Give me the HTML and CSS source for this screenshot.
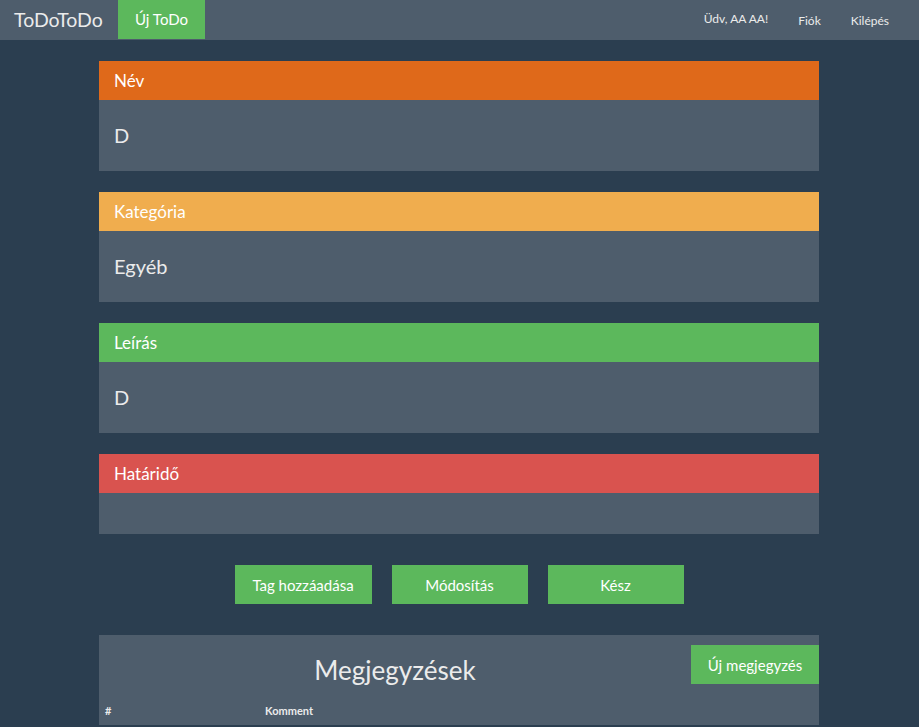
FILE: index.html
```html
<!DOCTYPE html>
<html lang="hu">
<head>
<meta charset="utf-8">
<title>ToDoToDo</title>
<link rel="stylesheet" href="styles.css">
</head>
<body>
<nav class="navbar">
  <div class="nav-left">
    <a class="brand">ToDoToDo</a>
    <a class="nav-new">Új ToDo</a>
  </div>
  <div class="nav-right">
    <span class="greet">Üdv, AA AA!</span>
    <a class="nav-link">Fiók</a>
    <a class="nav-link">Kilépés</a>
  </div>
</nav>
<main class="container">
  <section class="panel">
    <div class="panel-heading orange">Név</div>
    <div class="panel-body">D</div>
  </section>
  <section class="panel">
    <div class="panel-heading yellow">Kategória</div>
    <div class="panel-body">Egyéb</div>
  </section>
  <section class="panel">
    <div class="panel-heading green">Leírás</div>
    <div class="panel-body">D</div>
  </section>
  <section class="panel">
    <div class="panel-heading red">Határidő</div>
    <div class="panel-body empty"></div>
  </section>
  <div class="actions">
    <button class="btn">Tag hozzáadása</button>
    <button class="btn">Módosítás</button>
    <button class="btn">Kész</button>
  </div>
  <section class="notes">
    <div class="notes-head">
      <h2 class="notes-title">Megjegyzések</h2>
      <button class="btn btn-note">Új megjegyzés</button>
    </div>
    <div class="notes-table">
      <div class="col-num">#</div>
      <div class="col-comment">Komment</div>
    </div>
  </section>
</main>
</body>
</html>
```
FILE: styles.css
```css
* { box-sizing: border-box; }
html, body { margin: 0; padding: 0; }
body {
  background: #2b3e50;
  color: #ebebeb;
  font-family: Lato, "Open Sans", sans-serif;
  font-size: 15px;
  height: 727px;
  overflow: hidden;
}
.navbar {
  height: 40px;
  background: #4e5d6c;
  display: flex;
  justify-content: space-between;
  align-items: stretch;
}
.nav-left { display: flex; align-items: stretch; }
.brand {
  font-size: 19.5px;
  width: 118px;
  padding-left: 14px;
  line-height: 40px;
  color: #ebebeb;
  white-space: nowrap;
}
.nav-new {
  background: #5cb85c;
  color: #fff;
  width: 87px;
  text-align: center;
  font-size: 15px;
  line-height: 38px;
  height: 39px;
}
.nav-right {
  display: flex;
  align-items: center;
  padding-right: 30px;
  font-size: 12px;
}
.greet { margin-right: 30px; margin-top: -4px; }
.nav-link + .nav-link { margin-left: 30px; }
.container {
  width: 720px;
  margin: 21px 0 0 calc(50% - 360.5px);
}
.panel { margin-bottom: 21px; }
.panel-heading {
  height: 39px;
  line-height: 39px;
  padding: 0 15px;
  font-size: 17px;
  color: #fff;
}
.orange { background: #df691a; }
.yellow { background: #f0ad4e; }
.green { background: #5cb85c; }
.red { background: #d9534f; }
.panel-body {
  background: #4e5d6c;
  height: 71px;
  padding: 0 15px;
  line-height: 71px;
  font-size: 20px;
}
.panel-body.empty { height: 41px; }
.actions {
  display: flex;
  justify-content: center;
  gap: 20px;
  margin-top: 31px;
  margin-bottom: 31px;
}
.btn {
  background: #5cb85c;
  color: #fff;
  border: 0;
  font-family: inherit;
  font-size: 15px;
  height: 39px;
  width: 136px;
  padding: 0;
}
.actions .btn:first-child { width: 137px; }
.notes {
  background: #4e5d6c;
  height: 90px;
}
.notes-head {
  display: flex;
  align-items: flex-start;
  height: 62px;
}
.notes-title {
  flex: 1;
  margin: 0;
  text-align: center;
  font-weight: 400;
  font-size: 26px;
  line-height: 32px;
  padding-top: 19px;
  color: #ebebeb;
}
.btn-note {
  width: 128px;
  margin-top: 10px;
}
.notes-table {
  display: flex;
  font-size: 11px;
  font-weight: 700;
  line-height: 28px;
}
.col-num { width: 160px; padding-left: 6px; }
.col-comment { padding-left: 6px; }
```
